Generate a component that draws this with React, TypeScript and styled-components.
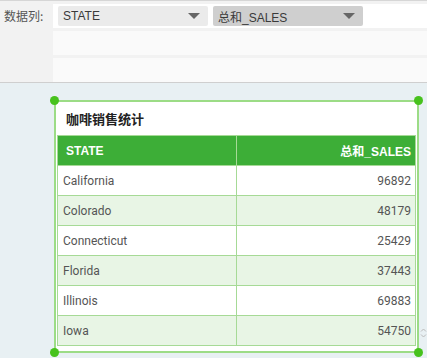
import styled, { createGlobalStyle } from 'styled-components'

const GlobalStyle = createGlobalStyle`
  html, body {
    margin: 0;
    padding: 0;
    background: #e8f0f3;
    font-family: Roboto, "Noto Sans CJK SC", sans-serif;
  }
`

const Page = styled.div`
  width: 427px;
  height: 358px;
  overflow: hidden;
  background: #e8f0f3;
`

const Toolbar = styled.div`
  border-top: 1px solid #d6d6d6;
  border-bottom: 1px solid #cfcfcf;
  background: #f2f2f2;
  display: grid;
  grid-template-columns: 53px 1fr;
  grid-template-rows: 24px 24px 24px;
  row-gap: 3px;
  padding: 3px 0 0 0;
  height: 78px;
  box-sizing: content-box;
`

const Label = styled.div`
  font-size: 12px;
  color: #555;
  padding-left: 4px;
  line-height: 24px;
  font-family: "Noto Sans CJK SC", sans-serif;
`

const Field = styled.div<{ $tone?: string }>`
  background: ${p => p.$tone || '#fafafa'};
  display: flex;
  align-items: center;
  gap: 5px;
  padding-left: 5px;
`

const Select = styled.div<{ $bg: string }>`
  width: 150px;
  height: 20px;
  border-radius: 2px;
  background: ${p => p.$bg};
  display: flex;
  align-items: center;
  justify-content: space-between;
  padding: 0 8px 0 5px;
  box-sizing: border-box;
  font-size: 12px;
  color: #3a3a3a;
  font-family: "Liberation Sans", "Noto Sans CJK SC", sans-serif;
`

const Caret = styled.span`
  width: 0;
  height: 0;
  border-left: 6px solid transparent;
  border-right: 6px solid transparent;
  border-top: 6px solid #666;
`

const Canvas = styled.div`
  padding: 17px 0 0 54px;
`

const Frame = styled.div`
  position: relative;
  width: 365px;
  height: 253px;
  border: 2px solid #9cdc86;
  box-sizing: border-box;
  background: #fff;
`

const Handle = styled.span<{ $x: 'left' | 'right'; $y: 'top' | 'bottom' }>`
  position: absolute;
  width: 9px;
  height: 9px;
  border-radius: 50%;
  background: #47c21d;
  ${p => p.$x}: -6px;
  ${p => p.$y}: -6px;
`

const Title = styled.div`
  height: 33px;
  line-height: 34px;
  padding-left: 10px;
  font-size: 13px;
  font-weight: bold;
  color: #222;
  font-family: "Noto Sans CJK SC", sans-serif;
`

const Table = styled.table`
  margin-left: 1px;
  width: 359px;
  border-collapse: collapse;
  font-size: 12px;
`

const Th = styled.th<{ $right?: boolean }>`
  height: 30px;
  padding: 0 ${p => (p.$right ? '4px' : '8px')};
  background: #3dae37;
  color: #fff;
  font-weight: bold;
  text-align: ${p => (p.$right ? 'right' : 'left')};
  border: 1px solid #a6da96;
  box-sizing: border-box;
  font-family: "Liberation Sans", "Noto Sans CJK SC", sans-serif;
`

const Row = styled.tr<{ $alt: boolean }>`
  background: ${p => (p.$alt ? '#e8f5e5' : '#fff')};
`

const Td = styled.td<{ $right?: boolean }>`
  height: 30px;
  padding: 0 ${p => (p.$right ? '4px' : '5px')};
  color: #555;
  text-align: ${p => (p.$right ? 'right' : 'left')};
  border: 1px solid #a6da96;
  box-sizing: border-box;
  width: 50%;
`

const Spinner = styled.svg`
  position: absolute;
  right: -10px;
  bottom: 12px;
`

const rows = [
  ['California', 96892],
  ['Colorado', 48179],
  ['Connecticut', 25429],
  ['Florida', 37443],
  ['Illinois', 69883],
  ['Iowa', 54750],
]

export default function App() {
  return (
    <Page>
      <GlobalStyle />
      <Toolbar>
        <Label>数据列:</Label>
        <Field $tone="#fff">
          <Select $bg="#ebebeb">
            STATE
            <Caret />
          </Select>
          <Select $bg="#cfcfcf">
            总和_SALES
            <Caret />
          </Select>
        </Field>
        <div />
        <Field />
        <div />
        <Field />
      </Toolbar>
      <Canvas>
        <Frame>
          <Handle $x="left" $y="top" />
          <Handle $x="right" $y="top" />
          <Handle $x="left" $y="bottom" />
          <Handle $x="right" $y="bottom" />
          <Title>咖啡销售统计</Title>
          <Table>
            <thead>
              <tr>
                <Th>STATE</Th>
                <Th $right>总和_SALES</Th>
              </tr>
            </thead>
            <tbody>
              {rows.map(([state, sales], i) => (
                <Row key={state} $alt={i % 2 === 1}>
                  <Td>{state}</Td>
                  <Td $right>{sales}</Td>
                </Row>
              ))}
            </tbody>
          </Table>
          <Spinner width="7" height="12" viewBox="0 0 7 12">
            <path d="M1 4.5 L3.5 2 L6 4.5 M1 7.5 L3.5 10 L6 7.5" fill="none" stroke="#bbb" strokeWidth="1" />
          </Spinner>
        </Frame>
      </Canvas>
    </Page>
  )
}
